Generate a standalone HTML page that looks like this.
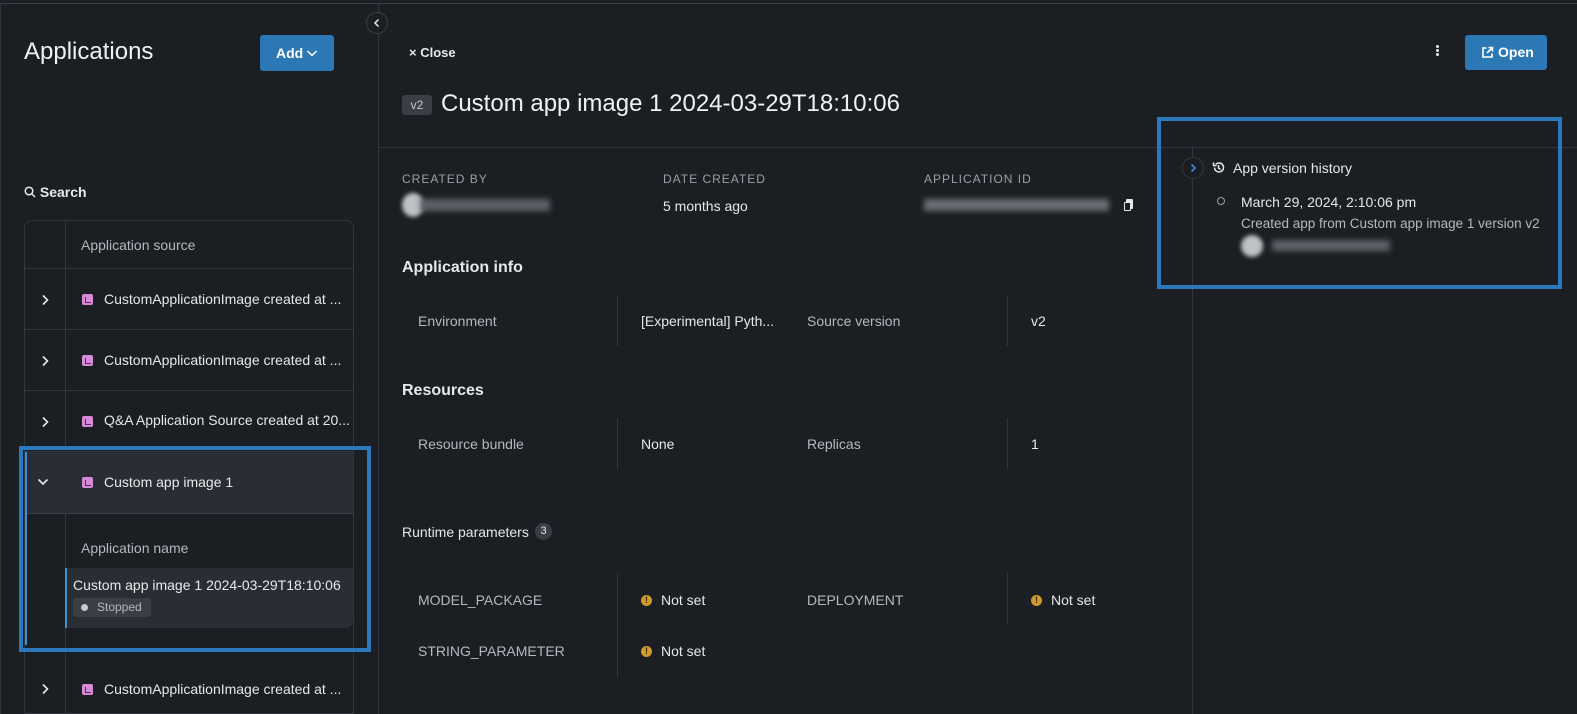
<!DOCTYPE html>
<html><head><style>
*{box-sizing:border-box;margin:0;padding:0}
body{width:1577px;height:714px;background:#1b1e22;font-family:"Liberation Sans",sans-serif;color:#e6e8eb;position:relative;overflow:hidden;font-size:14px}
.a{position:absolute;white-space:nowrap}
.l{background:#33373d;position:absolute}
.muted{color:#b5b9bf}
.cap{color:#9aa0a6;font-size:12px;letter-spacing:1px}
.ico{display:inline-block;width:11px;height:11px;background:#d68ad8;border-radius:2px;position:absolute}
.ico:after{content:"";position:absolute;left:3px;bottom:2px;width:5px;height:5px;border-left:1px solid #5a2a5c;border-bottom:1px solid #5a2a5c}
.warn{display:inline-block;width:11px;height:11px;border-radius:50%;background:#d09a2c;position:absolute;color:#3a2a08;font-size:9px;font-weight:bold;text-align:center;line-height:11px}
.box{position:absolute;border:4px solid #2b78be}
svg.c{position:absolute}
</style></head><body>
<div class="l" style="left:0;top:3px;width:1577px;height:1px;background:#3a3e44"></div>
<div class="l" style="left:0;top:3px;width:1px;height:711px"></div>
<div class="l" style="left:378px;top:3px;width:1px;height:711px"></div>
<div class="a" style="left:366px;top:12px;width:22px;height:22px;border:1px solid #3a3e44;border-radius:50%;background:#1b1e22"></div>
<svg class="c" style="left:372px;top:18px" width="10" height="10" viewBox="0 0 10 10"><path d="M6.5 1.5L3 5l3.5 3.5" stroke="#e6e8eb" stroke-width="1.5" fill="none"/></svg>

<div class="a" style="left:24px;top:38px;font-size:24px;color:#f0f1f3">Applications</div>
<div class="a" style="left:260px;top:35px;width:74px;height:36px;background:#2b78b5;border-radius:3px;color:#fff;font-weight:bold;font-size:14px;line-height:36px;padding-left:16px">Add</div>
<svg class="c" style="left:306px;top:48px" width="12" height="10" viewBox="0 0 12 10"><path d="M1.5 3l4.5 4.5L10.5 3" stroke="#fff" stroke-width="1.5" fill="none"/></svg>
<div class="a" style="left:24px;top:184px;font-weight:bold;font-size:14px"><svg width="12" height="12" viewBox="0 0 12 12" style="vertical-align:-1px"><circle cx="5" cy="5" r="3.8" stroke="#e6e8eb" stroke-width="1.5" fill="none"/><path d="M8 8l3 3" stroke="#e6e8eb" stroke-width="1.5"/></svg> Search</div>

<div class="a" style="left:24px;top:220px;width:330px;height:494px;border:1px solid #33373d;border-radius:8px 8px 0 0"></div>
<div class="l" style="left:65px;top:221px;width:1px;height:493px"></div>
<div class="a muted" style="left:81px;top:237px">Application source</div>
<div class="l" style="left:25px;top:268px;width:328px;height:1px"></div>
<div class="l" style="left:25px;top:329px;width:328px;height:1px"></div>
<div class="l" style="left:25px;top:390px;width:328px;height:1px"></div>
<div class="l" style="left:25px;top:451px;width:328px;height:1px"></div>
<svg class="c" style="left:40px;top:294px" width="10" height="12" viewBox="0 0 10 12"><path d="M3 1.5L7.5 6 3 10.5" stroke="#e6e8eb" stroke-width="1.6" fill="none"/></svg>
<span class="ico" style="left:82px;top:294px"></span><div class="a" style="left:104px;top:291px">CustomApplicationImage created at ...</div>
<svg class="c" style="left:40px;top:355px" width="10" height="12" viewBox="0 0 10 12"><path d="M3 1.5L7.5 6 3 10.5" stroke="#e6e8eb" stroke-width="1.6" fill="none"/></svg>
<span class="ico" style="left:82px;top:355px"></span><div class="a" style="left:104px;top:352px">CustomApplicationImage created at ...</div>
<svg class="c" style="left:40px;top:416px" width="10" height="12" viewBox="0 0 10 12"><path d="M3 1.5L7.5 6 3 10.5" stroke="#e6e8eb" stroke-width="1.6" fill="none"/></svg>
<span class="ico" style="left:82px;top:416px"></span><div class="a" style="left:104px;top:412px">Q&amp;A Application Source created at 20...</div>

<div class="a" style="left:25px;top:452px;width:328px;height:61px;background:#2a2e34"></div>
<div class="a" style="left:25px;top:452px;width:2px;height:193px;background:#3d8fd6"></div>
<svg class="c" style="left:37px;top:477px" width="12" height="10" viewBox="0 0 12 10"><path d="M1.5 2.5L6 7l4.5-4.5" stroke="#e6e8eb" stroke-width="1.6" fill="none"/></svg>
<span class="ico" style="left:82px;top:477px"></span><div class="a" style="left:104px;top:474px">Custom app image 1</div>
<div class="l" style="left:27px;top:513px;width:326px;height:1px;background:#3a3e44"></div>
<div class="a muted" style="left:81px;top:540px">Application name</div>
<div class="a" style="left:65px;top:568px;width:288px;height:60px;background:#2a2e34;border-left:2px solid #3d8fd6;border-radius:0 0 8px 0"></div>
<div class="a" style="left:73px;top:577px">Custom app image 1 2024-03-29T18:10:06</div>
<div class="a" style="left:73px;top:598px;width:78px;height:19px;background:#3a3f46;border-radius:3px;font-size:12px;color:#b5b9bf;line-height:19px;padding-left:24px">Stopped</div>
<div class="a" style="left:81px;top:604px;width:7px;height:7px;border-radius:50%;background:#c7cad0"></div>
<div class="l" style="left:25px;top:649px;width:328px;height:1px"></div>
<svg class="c" style="left:40px;top:683px" width="10" height="12" viewBox="0 0 10 12"><path d="M3 1.5L7.5 6 3 10.5" stroke="#e6e8eb" stroke-width="1.6" fill="none"/></svg>
<span class="ico" style="left:82px;top:684px"></span><div class="a" style="left:104px;top:681px">CustomApplicationImage created at ...</div>
<div class="box" style="left:19px;top:446px;width:352px;height:206px"></div>

<div class="a" style="left:409px;top:45px;font-weight:bold;font-size:13px">× Close</div>
<div class="a" style="left:1436px;top:45px;width:3px;height:3px;background:#e6e8eb;border-radius:50%;box-shadow:0 4px 0 #e6e8eb,0 8px 0 #e6e8eb"></div>
<div class="a" style="left:1465px;top:35px;width:82px;height:35px;background:#2b78b5;border-radius:3px;color:#fff;font-weight:bold;line-height:35px;padding-left:33px">Open</div>
<svg class="c" style="left:1481px;top:46px" width="13" height="13" viewBox="0 0 13 13"><path d="M5.5 2H2v9h9V7.5M7.5 1.5h4v4M11.5 1.5L6 7" stroke="#fff" stroke-width="1.6" fill="none"/></svg>
<div class="a" style="left:402px;top:95px;width:30px;height:20px;background:#3a3f46;border-radius:3px;font-size:12px;color:#c7cad0;text-align:center;line-height:20px">v2</div>
<div class="a" style="left:441px;top:90px;font-size:24px;color:#f0f1f3">Custom app image 1 2024-03-29T18:10:06</div>
<div class="l" style="left:379px;top:147px;width:1198px;height:1px"></div>
<div class="l" style="left:1192px;top:148px;width:1px;height:566px"></div>

<div class="a cap" style="left:402px;top:172px">CREATED BY</div>
<div class="a cap" style="left:663px;top:172px">DATE CREATED</div>
<div class="a cap" style="left:924px;top:172px">APPLICATION ID</div>
<div class="a" style="left:402px;top:193px;width:22px;height:24px;border-radius:50%;background:#bfc2c6;filter:blur(2px)"></div>
<div class="a" style="left:420px;top:199px;width:130px;height:12px;background:#5d6167;filter:blur(3px)"></div>
<div class="a" style="left:663px;top:198px">5 months ago</div>
<div class="a" style="left:924px;top:199px;width:185px;height:12px;background:#6a6e74;filter:blur(3px)"></div>
<div class="a" style="left:1126px;top:199px;width:7px;height:10px;border:1.5px solid #e6e8eb;border-radius:1px;background:#e6e8eb"></div>
<div class="a" style="left:1124px;top:202px;width:7px;height:9px;border:1.5px solid #e6e8eb;border-radius:1px;background:#1b1e22"></div>

<div class="a" style="left:402px;top:259px;font-weight:bold;font-size:16px">Application info</div>
<div class="l" style="left:617px;top:295px;width:1px;height:51px"></div>
<div class="l" style="left:1007px;top:295px;width:1px;height:51px"></div>
<div class="a muted" style="left:418px;top:313px">Environment</div>
<div class="a" style="left:641px;top:313px">[Experimental] Pyth...</div>
<div class="a muted" style="left:807px;top:313px">Source version</div>
<div class="a" style="left:1031px;top:313px">v2</div>

<div class="a" style="left:402px;top:382px;font-weight:bold;font-size:16px">Resources</div>
<div class="l" style="left:617px;top:418px;width:1px;height:51px"></div>
<div class="l" style="left:1007px;top:418px;width:1px;height:51px"></div>
<div class="a muted" style="left:418px;top:436px">Resource bundle</div>
<div class="a" style="left:641px;top:436px">None</div>
<div class="a muted" style="left:807px;top:436px">Replicas</div>
<div class="a" style="left:1031px;top:436px">1</div>

<div class="a" style="left:402px;top:524px">Runtime parameters</div>
<div class="a" style="left:535px;top:523px;width:17px;height:17px;border-radius:50%;background:#3a3f46;font-size:11px;text-align:center;line-height:17px">3</div>
<div class="l" style="left:617px;top:573px;width:1px;height:104px"></div>
<div class="l" style="left:1007px;top:573px;width:1px;height:52px"></div>
<div class="a muted" style="left:418px;top:592px">MODEL_PACKAGE</div>
<span class="warn" style="left:641px;top:595px">!</span><div class="a" style="left:661px;top:592px">Not set</div>
<div class="a muted" style="left:807px;top:592px">DEPLOYMENT</div>
<span class="warn" style="left:1031px;top:595px">!</span><div class="a" style="left:1051px;top:592px">Not set</div>
<div class="a muted" style="left:418px;top:643px">STRING_PARAMETER</div>
<span class="warn" style="left:641px;top:646px">!</span><div class="a" style="left:661px;top:643px">Not set</div>

<div class="a" style="left:1182px;top:157px;width:22px;height:22px;border:1px solid #33373d;border-radius:50%;background:#1b1e22"></div>
<svg class="c" style="left:1188px;top:163px" width="10" height="10" viewBox="0 0 10 10"><path d="M3.5 1.5L7 5 3.5 8.5" stroke="#3d8fd6" stroke-width="1.6" fill="none"/></svg>
<svg class="c" style="left:1212px;top:161px" width="13" height="13" viewBox="0 0 13 13"><path d="M2.5 6.5a4.5 4.5 0 1 0 1.3-3.2M1.5 1.5v3h3M6.5 4v3l2 1.5" stroke="#e6e8eb" stroke-width="1.5" fill="none"/></svg>
<div class="a" style="left:1233px;top:160px">App version history</div>
<div class="a" style="left:1217px;top:197px;width:8px;height:8px;border:1px solid #9aa0a6;border-radius:50%"></div>
<div class="a" style="left:1241px;top:194px">March 29, 2024, 2:10:06 pm</div>
<div class="a muted" style="left:1241px;top:216px;font-size:13.5px">Created app from Custom app image 1 version v2</div>
<div class="a" style="left:1241px;top:235px;width:22px;height:22px;border-radius:50%;background:#bfc2c6;filter:blur(2px)"></div>
<div class="a" style="left:1272px;top:240px;width:118px;height:11px;background:#5d6167;filter:blur(3px)"></div>
<div class="box" style="left:1157px;top:117px;width:405px;height:172px"></div>
</body></html>
